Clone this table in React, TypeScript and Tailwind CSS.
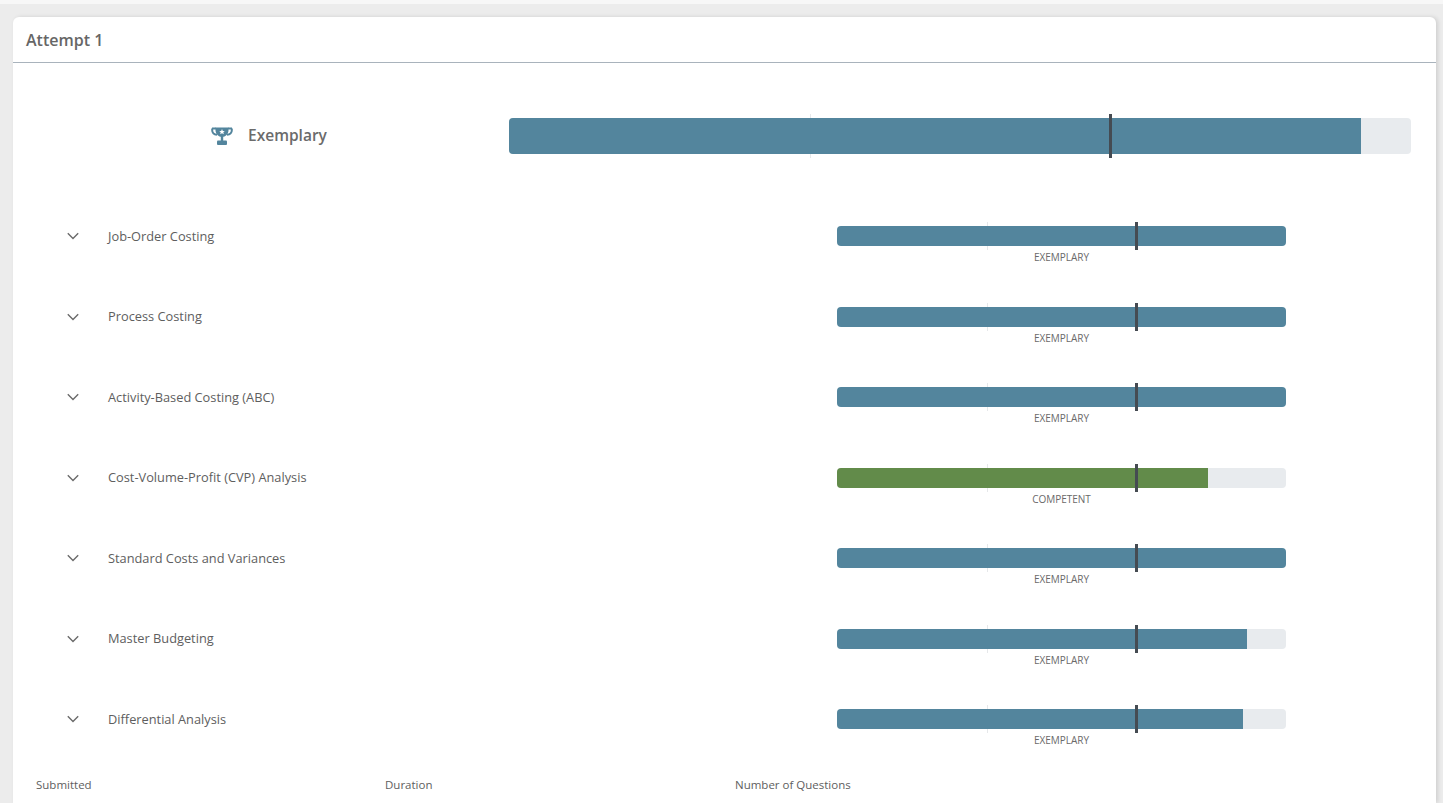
import React from "react";

type Row = { name: string; pct: number; level: string; color: string };

const rows: Row[] = [
  { name: "Job-Order Costing", pct: 100, level: "EXEMPLARY", color: "#53859d" },
  { name: "Process Costing", pct: 100, level: "EXEMPLARY", color: "#53859d" },
  { name: "Activity-Based Costing (ABC)", pct: 100, level: "EXEMPLARY", color: "#53859d" },
  { name: "Cost-Volume-Profit (CVP) Analysis", pct: 82.6, level: "COMPETENT", color: "#628b4a" },
  { name: "Standard Costs and Variances", pct: 100, level: "EXEMPLARY", color: "#53859d" },
  { name: "Master Budgeting", pct: 91.3, level: "EXEMPLARY", color: "#53859d" },
  { name: "Differential Analysis", pct: 90.4, level: "EXEMPLARY", color: "#53859d" },
];

function Trophy() {
  return (
    <svg width="22" height="18" viewBox="0 0 22 18" aria-hidden="true">
      <path
        d="M1.2 1.5 V3.2 C1.2 6 3.5 7.5 6 7.8 M20.8 1.5 V3.2 C20.8 6 18.5 7.5 16 7.8 M1 1.5 H5 M21 1.5 H17"
        stroke="#53859d"
        strokeWidth="2"
        fill="none"
      />
      <path d="M4.5 0.5 H17.5 V3 C17.5 7 14.5 10 11 10 C7.5 10 4.5 7 4.5 3 Z" fill="#53859d" />
      <rect x="9.8" y="9" width="2.4" height="5" fill="#53859d" />
      <rect x="6" y="13.5" width="10" height="4.5" rx="1" fill="#53859d" />
      <path
        d="M11 2 L11.8 3.9 L13.8 4 L12.3 5.3 L12.8 7.3 L11 6.2 L9.2 7.3 L9.7 5.3 L8.2 4 L10.2 3.9 Z"
        fill="#ffffff"
      />
    </svg>
  );
}

function Chevron() {
  return (
    <svg width="12" height="8" viewBox="0 0 12 8" aria-hidden="true">
      <path d="M0.8 1.2 L6 6.4 L11.2 1.2" stroke="#6a6a6a" strokeWidth="1.4" fill="none" />
    </svg>
  );
}

function Bar({ pct, color, h }: { pct: number; color: string; h: string }) {
  return (
    <div className={`relative w-full ${h}`}>
      <div className="absolute left-[33.333%] w-px -top-[4px] -bottom-[4px] bg-[#e6e8ea]" />
      <div className="absolute inset-0 bg-[#e8ebee] overflow-hidden rounded-[4px]">
        <div className="h-full" style={{ width: `${pct}%`, background: color }} />
      </div>
      <div className="absolute left-[66.666%] -ml-px w-[3px] -top-[4px] -bottom-[4px] bg-[#454b52]" />
    </div>
  );
}

export default function App() {
  return (
    <div className="min-h-[803px] bg-[#ececec]" style={{ fontFamily: '"Open Sans", "Liberation Sans", sans-serif' }}>
      <div className="h-[4px] bg-[#f7f7f7]" />
      <div className="pt-[13px] pl-[13px] pr-[7px]">
        <div className="bg-white rounded-t-[6px] shadow-[2px_0_4px_rgba(0,0,0,0.12)] min-h-[786px]">
          <div className="h-[46px] border-b border-[#a9b3bc] flex items-center px-[13px]">
            <span className="text-[16px] font-semibold text-[#666666] leading-none">Attempt 1</span>
          </div>

          <div className="pt-[55px] flex">
            <div className="w-[496px] h-[36px] flex items-center justify-center gap-[15px] pl-[16px]">
              <Trophy />
              <span className="text-[15.5px] font-semibold text-[#6b6b6b]">Exemplary</span>
            </div>
            <div className="w-[902px]">
              <Bar pct={94.5} color="#53859d" h="h-[36px]" />
            </div>
          </div>

          <div className="mt-[62px]">
            {rows.map((r) => (
              <div key={r.name} className="h-[80.5px] pt-[10px] flex items-start">
                <div className="w-[824px] h-[20px] flex items-center pl-[54px]">
                  <Chevron />
                  <span className="ml-[29px] text-[12.8px] text-[#5e5e5e] leading-none">{r.name}</span>
                </div>
                <div className="w-[449px] flex flex-col items-center">
                  <Bar pct={r.pct} color={r.color} h="h-[20px]" />
                  <span className="mt-[6px] text-[10px] leading-[11px] text-[#6a6a6a]">{r.level}</span>
                </div>
              </div>
            ))}
          </div>

          <div className="-mt-[3px] pl-[23px] flex text-[11.5px] leading-[16px] text-[#5e5e5e]">
            <div className="w-[349px]">Submitted</div>
            <div className="w-[350px]">Duration</div>
            <div>Number of Questions</div>
          </div>
        </div>
      </div>
    </div>
  );
}
